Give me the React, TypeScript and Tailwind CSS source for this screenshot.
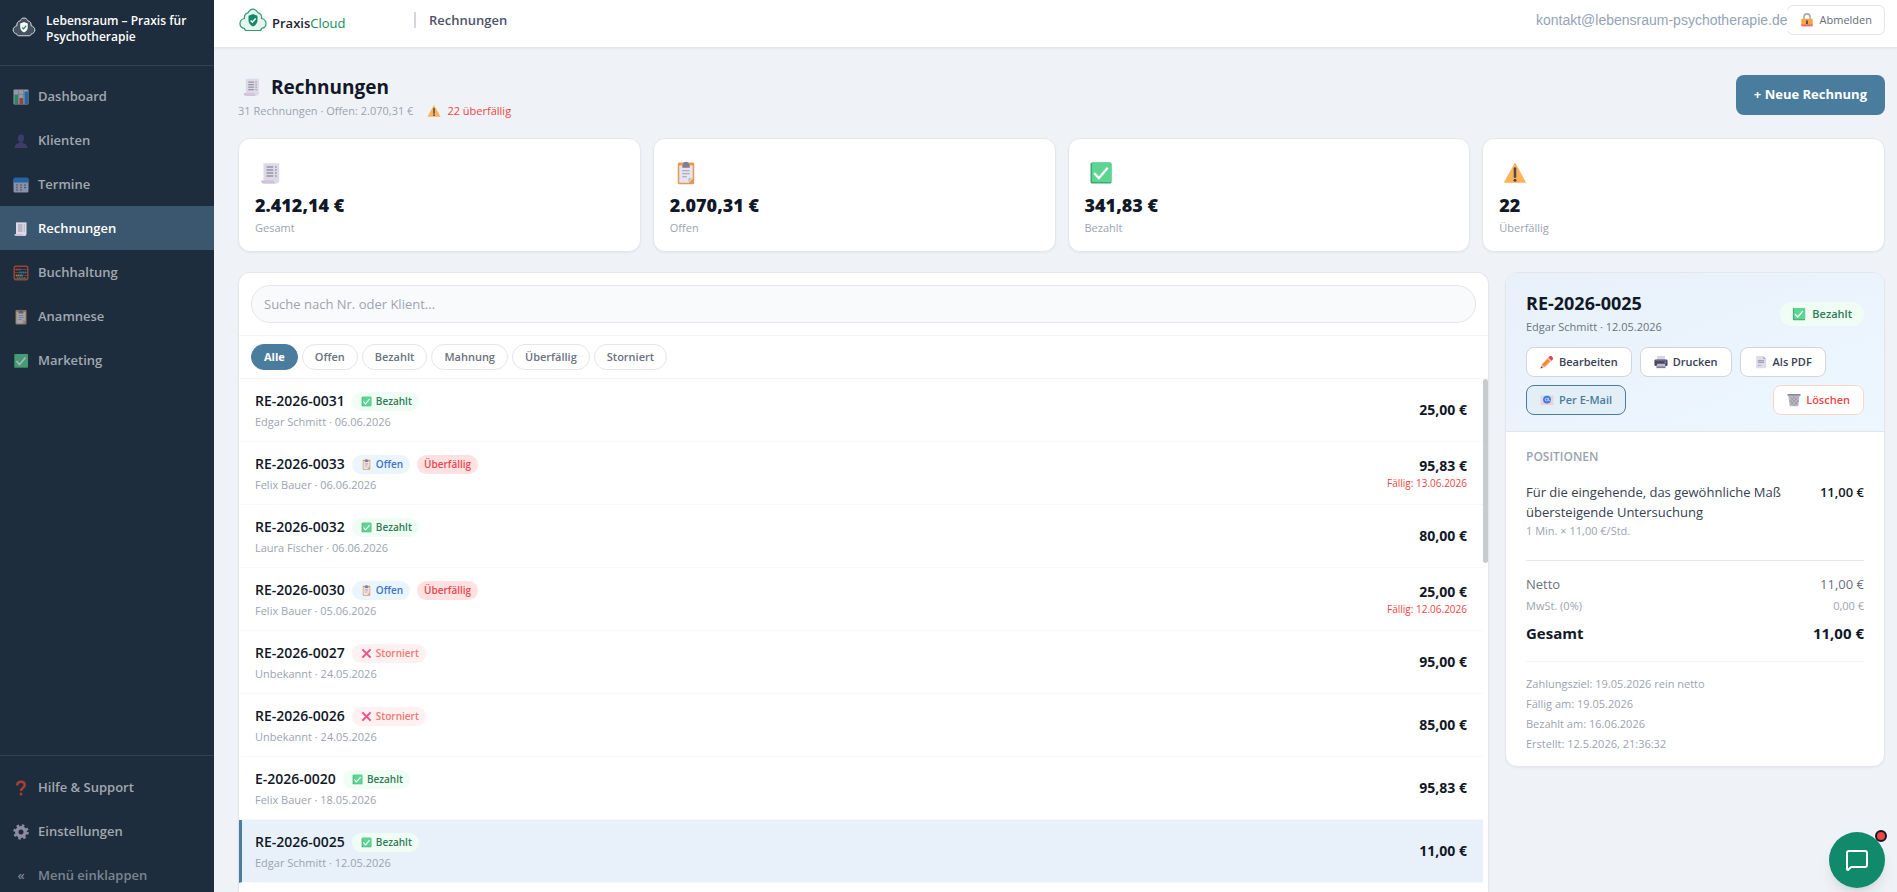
import React from 'react';
import { MessageSquare } from 'lucide-react';

type IconName =
  | 'receipt' | 'clipboard' | 'check' | 'warning' | 'chart' | 'user' | 'calendar' | 'abacus'
  | 'question' | 'gear' | 'pencil' | 'printer' | 'page' | 'mail' | 'trash' | 'lock' | 'cross';

const drawings: Record<IconName, React.ReactNode> = {
  receipt: (
    <>
      <path d="M6 2l2 1.5L10 2l2 1.5L14 2l2 1.5L18 2l2 1.5L22 2l2 1.5L27 2v24a4 4 0 0 1-4 4H6z" fill="#dcdae6" />
      <path d="M3 26h17a3 3 0 0 0 3 4H6a3 3 0 0 1-3-4z" fill="#c6bdd4" />
      <path d="M6 28h14" stroke="#e0c2e4" strokeWidth="1.5" />
      <path d="M10 8h9M21.5 8h2M10 12h9M21.5 12h2M10 16h9M21.5 16h2M10 20h9M21.5 20h2" stroke="#9795a3" strokeWidth="2" />
    </>
  ),
  clipboard: (
    <>
      <rect x="5" y="2" width="22" height="29" rx="2" fill="#e39a55" />
      <path d="M7 6h18v17l-5 6H7z" fill="#e6e4ee" />
      <path d="M25 22l-6 6.5V23z" fill="#c4c0d0" />
      <path d="M12 5a4 4 0 0 1 8 0l1 1v3H11V6z" fill="#807c91" />
      <path d="M11 13h10M11 17h10M11 21h6" stroke="#a39bb0" strokeWidth="1.6" />
    </>
  ),
  check: (
    <>
      <rect x="2" y="2" width="28" height="28" rx="2" fill="#3da873" />
      <rect x="4" y="2" width="26" height="26" rx="2" fill="#5bd692" />
      <path d="M7 16l6 7L25 9" fill="none" stroke="#fff" strokeWidth="3" />
    </>
  ),
  warning: (
    <>
      <path d="M16 2l15 27H1z" fill="#ffb257" />
      <path d="M16 10v11" stroke="#4a4a55" strokeWidth="3.4" strokeLinecap="round" />
      <circle cx="16" cy="25.5" r="2" fill="#4a4a55" />
    </>
  ),
  chart: (
    <>
      <rect x="1" y="1" width="30" height="30" rx="2" fill="#d3d3e2" />
      <path d="M11 2v28M21 2v28M2 11h28" stroke="#a3a2b8" strokeWidth="1.5" />
      <rect x="3" y="12" width="7" height="18" fill="#32b877" />
      <rect x="13" y="18" width="7" height="12" fill="#e04b48" />
      <rect x="23" y="5" width="7" height="25" fill="#258bd6" />
    </>
  ),
  user: (
    <>
      <path d="M16 3c5 0 7 4 6 8 0 4-2 7-6 7s-6-3-6-7c-1-4 1-8 6-8z" fill="#4c4580" />
      <path d="M3 30c0-6 4-9 10-10v-3h6v3c6 1 10 4 10 10z" fill="#4c4580" />
    </>
  ),
  calendar: (
    <>
      <rect x="1" y="3" width="30" height="28" rx="3" fill="#c4c9dd" />
      <path d="M4 1h24a3 3 0 0 1 3 3v7H1V4a3 3 0 0 1 3-3z" fill="#2584d8" />
      <path d="M6 16h4M14 16h4M22 16h4M6 21h4M14 21h4M6 26h4M14 26h4" stroke="#85849c" strokeWidth="3" />
      <path d="M22 21h4" stroke="#2584d8" strokeWidth="3" />
    </>
  ),
  abacus: (
    <>
      <rect x="2.5" y="2.5" width="27" height="27" rx="3" fill="none" stroke="#d9532f" strokeWidth="3" />
      <path d="M4 9h24M4 15h24M4 21h24M4 27h24" stroke="#c98a76" strokeWidth="1" />
      <path d="M6 9h10" stroke="#e0503f" strokeWidth="4" strokeDasharray="2.5 1" />
      <path d="M13 15h13" stroke="#318de0" strokeWidth="4" strokeDasharray="2.5 1" />
      <path d="M6 21h14" stroke="#e0a53e" strokeWidth="4" strokeDasharray="2.5 1" />
      <path d="M8 26h18" stroke="#37b57a" strokeWidth="3" strokeDasharray="2.5 1" />
    </>
  ),
  question: (
    <>
      <path d="M8.5 11c0-5 3-7.5 7.5-7.5s7.5 3 7.5 7c0 5-7.5 5.500-7.5 11.500" fill="none" stroke="#f0492f" strokeWidth="5" />
      <circle cx="16" cy="28" r="3" fill="#f0492f" />
    </>
  ),
  gear: (
    <>
      <circle cx="16" cy="16" r="8.5" fill="none" stroke="#aaa5b8" strokeWidth="7" />
      <circle cx="16" cy="16" r="13" fill="none" stroke="#aaa5b8" strokeWidth="5" strokeDasharray="5 5.21" />
    </>
  ),
  pencil: (
    <>
      <path d="M4 21L21 4l7 7-17 17z" fill="#f59a4b" />
      <path d="M7 24L24 7" stroke="#d46a35" strokeWidth="2" />
      <path d="M4 21l7 7-10 3z" fill="#e8b690" />
      <path d="M3 26l3 3-5 2z" fill="#44404f" />
      <path d="M19 6l3-3c3-3 10 3 7 7l-3 3z" fill="#e8414f" />
      <path d="M18 7l7 7" stroke="#cfcbdc" strokeWidth="3" />
    </>
  ),
  printer: (
    <>
      <path d="M7 2h18v11H7z" fill="#d5d4e2" />
      <rect x="1" y="10" width="30" height="15" rx="3" fill="#494560" />
      <path d="M4 13h24" stroke="#6a6685" strokeWidth="3" />
      <path d="M7 20h18l2 10H5z" fill="#bcbacb" />
      <path d="M6 28h20" stroke="#7f7b94" strokeWidth="3" />
      <circle cx="26" cy="17" r="2" fill="#4da4ea" />
    </>
  ),
  page: (
    <>
      <path d="M5 2h16l7 7v21H5z" fill="#dddbe7" />
      <path d="M21 2l7 7h-7z" fill="#b9b4c8" />
      <path d="M9 13h14M9 17h14" stroke="#a7a1b8" strokeWidth="3" />
      <path d="M9 24h8" stroke="#b3aec2" strokeWidth="2" />
    </>
  ),
  mail: (
    <>
      <path d="M1 5h30v22H1z" fill="#dfd8e9" />
      <path d="M1 27l11-10h8l11 10z" fill="#f0c7df" />
      <circle cx="16" cy="15" r="9" fill="#3f7ed2" />
      <circle cx="15" cy="15" r="3" fill="none" stroke="#cbdcf5" strokeWidth="2" />
      <path d="M19 11v5a2.5 2.5 0 0 0 4 1" fill="none" stroke="#cbdcf5" strokeWidth="2" />
    </>
  ),
  trash: (
    <>
      <path d="M3 5h26l-3 25H6z" fill="#bdbac7" />
      <path d="M7 9l17 18M14 8l12 12M6 17l11 12M25 9L8 27M18 8L7 20M26 17L15 29" stroke="#88858f" strokeWidth="1.4" />
      <path d="M1 4h30" stroke="#8d8a98" strokeWidth="4" />
    </>
  ),
  lock: (
    <>
      <path d="M9 15V9a7 7 0 0 1 14 0v6" fill="none" stroke="#a9a6b6" strokeWidth="3.5" />
      <rect x="3" y="13" width="26" height="17" rx="2" fill="#f9a63f" />
      <path d="M3 26h26v2a2 2 0 0 1-2 2H5a2 2 0 0 1-2-2z" fill="#f0647c" />
      <path d="M16 17v8" stroke="#4b4553" strokeWidth="4" />
    </>
  ),
  cross: <path d="M4 4l24 24M28 4L4 28" stroke="#f0528a" strokeWidth="6" />,
};

const Icon = ({ name, className }: { name: IconName; className: string }) => (
  <svg viewBox="0 0 32 32" className={`shrink-0 ${className}`} aria-hidden="true">
    {drawings[name]}
  </svg>
);

const CloudLogo = ({ dark = false, className }: { dark?: boolean; className: string }) => (
  <svg viewBox="0 0 28 24" className={`shrink-0 ${className}`} aria-hidden="true">
    <path
      d="M7.5 22.5c-1.500 0-2-1-2-2C2.800 20 1 18 1 15.500s2-4.500 4.500-5C5 7.500 6.500 5.200 9 4.800 10.300 2.500 12 1.200 14 1.200s3.700 1.300 5 3.600c2.500.4 4 2.700 3.500 5.700 2.500.5 4.500 2.500 4.500 5s-1.800 4.500-4.500 5c0 1-.5 2-2 2z"
      fill={dark ? '#46525f' : '#e6f5ee'}
      stroke={dark ? '#d9dde2' : '#2c9a76'}
      strokeWidth="1.2"
    />
    <path d="M14 6l4.500 1.700v4.600c0 3-1.800 5-4.500 6.200-2.700-1.200-4.500-3.200-4.500-6.200V7.700z" fill={dark ? '#fff' : '#118a6b'} />
    <path d="M11.6 12.400l1.800 1.800 3.200-3.700" fill="none" stroke={dark ? '#118a6b' : '#fff'} strokeWidth="1.4" />
  </svg>
);

const navItems: { label: string; icon: IconName; active?: boolean }[] = [
  { label: 'Dashboard', icon: 'chart' },
  { label: 'Klienten', icon: 'user' },
  { label: 'Termine', icon: 'calendar' },
  { label: 'Rechnungen', icon: 'receipt', active: true },
  { label: 'Buchhaltung', icon: 'abacus' },
  { label: 'Anamnese', icon: 'clipboard' },
  { label: 'Marketing', icon: 'check' },
];

const stats: { value: string; label: string; icon: IconName }[] = [
  { value: '2.412,14 €', label: 'Gesamt', icon: 'receipt' },
  { value: '2.070,31 €', label: 'Offen', icon: 'clipboard' },
  { value: '341,83 €', label: 'Bezahlt', icon: 'check' },
  { value: '22', label: 'Überfällig', icon: 'warning' },
];

const filters = ['Alle', 'Offen', 'Bezahlt', 'Mahnung', 'Überfällig', 'Storniert'];

type Status = 'Bezahlt' | 'Offen' | 'Storniert';

const statusStyles: Record<Status, { icon: IconName; className: string }> = {
  Bezahlt: { icon: 'check', className: 'bg-[#f0fdf4] text-[#2f7a58]' },
  Offen: { icon: 'clipboard', className: 'bg-[#ebf5ff] text-[#3b74c9]' },
  Storniert: { icon: 'cross', className: 'bg-[#fff1f1] text-[#f2776f]' },
};

const invoices: { nr: string; client: string; date: string; status: Status; amount: string; due?: string; selected?: boolean }[] = [
  { nr: 'RE-2026-0031', client: 'Edgar Schmitt', date: '06.06.2026', status: 'Bezahlt', amount: '25,00 €' },
  { nr: 'RE-2026-0033', client: 'Felix Bauer', date: '06.06.2026', status: 'Offen', amount: '95,83 €', due: '13.06.2026' },
  { nr: 'RE-2026-0032', client: 'Laura Fischer', date: '06.06.2026', status: 'Bezahlt', amount: '80,00 €' },
  { nr: 'RE-2026-0030', client: 'Felix Bauer', date: '05.06.2026', status: 'Offen', amount: '25,00 €', due: '12.06.2026' },
  { nr: 'RE-2026-0027', client: 'Unbekannt', date: '24.05.2026', status: 'Storniert', amount: '95,00 €' },
  { nr: 'RE-2026-0026', client: 'Unbekannt', date: '24.05.2026', status: 'Storniert', amount: '85,00 €' },
  { nr: 'E-2026-0020', client: 'Felix Bauer', date: '18.05.2026', status: 'Bezahlt', amount: '95,83 €' },
  { nr: 'RE-2026-0025', client: 'Edgar Schmitt', date: '12.05.2026', status: 'Bezahlt', amount: '11,00 €', selected: true },
];

const navLink = 'flex h-11 items-center gap-[9px] pt-0.5 pl-[13px] text-[13px] font-semibold';

const Sidebar = () => (
  <aside className="flex w-[214px] shrink-0 flex-col bg-[#1e2d3d]">
    <div className="flex h-[66px] items-start gap-2.5 border-b border-[#32414f] px-3 pt-[13px]">
      <CloudLogo dark className="mt-1 h-5 w-6" />
      <p className="text-[12px] leading-4 font-semibold text-white">
        Lebensraum – Praxis für
        <br />
        Psychotherapie
      </p>
    </div>
    <nav className="flex-1 pt-2">
      {navItems.map((item) => (
        <a key={item.label} href="#" className={`${navLink} ${item.active ? 'bg-[#3b566f] text-white' : 'text-[#a1a8b0]'}`}>
          <Icon name={item.icon} className={item.active ? 'size-4' : 'size-4 opacity-65'} />
          {item.label}
        </a>
      ))}
    </nav>
    <div className="border-t border-[#32414f] pt-[9px]">
      <a href="#" className={`${navLink} text-[#a1a8b0]`}>
        <Icon name="question" className="size-4 opacity-65" />
        Hilfe &amp; Support
      </a>
      <a href="#" className={`${navLink} text-[#a1a8b0]`}>
        <Icon name="gear" className="size-4 opacity-80" />
        Einstellungen
      </a>
      <button className="flex h-[39px] items-start gap-[9px] pt-3 pl-[13px] text-[13px] leading-5 font-semibold text-[#7b8591]">
        <span className="w-4 text-center">«</span>
        Menü einklappen
      </button>
    </div>
  </aside>
);

const Header = () => (
  <header className="flex h-12 items-center border-b border-[#e2e5ea] bg-white pt-[5px] pr-3 pb-3 pl-[25px] shadow-xs">
    <div className="flex w-[175px] items-center gap-[5px]">
      <CloudLogo className="h-6 w-7" />
      <span className="pt-1.5 text-[13px] leading-4 font-semibold text-[#1e2433]">
        Praxis<span className="font-normal text-[#118a5b]">Cloud</span>
      </span>
    </div>
    <div className="h-4 w-0.5 bg-[#d5d7df]" />
    <span className="ml-[13px] pt-0.5 text-[13px] font-semibold text-[#4e5268]">Rechnungen</span>
    <span className="relative z-10 ml-auto -mr-px bg-white font-['Liberation_Sans',Arial,sans-serif] text-[14px] text-[#94a3b8]">
      kontakt@lebensraum-psychotherapie.de
    </span>
    <button className="flex h-[30px] items-center gap-1.5 rounded-md border border-[#e5e5ec] bg-white px-3 text-[11px] font-medium text-[#666a7a]">
      <Icon name="lock" className="size-3.5" />
      Abmelden
    </button>
  </header>
);

const InvoiceList = () => (
  <section className="min-w-0 flex-1 rounded-t-xl border border-b-0 border-[#e4e6eb] bg-white shadow-xs">
    <div className="border-b border-[#f2f3f5] p-3">
      <input
        type="search"
        aria-label="Rechnungen suchen"
        placeholder="Suche nach Nr. oder Klient..."
        className="h-[38px] w-full rounded-full border border-[#e4e6eb] bg-[#f9fafc] px-3 text-[13px] placeholder:text-[#9ea3af]"
      />
    </div>
    <div className="flex gap-1 border-b border-[#f2f3f5] px-3 py-2">
      {filters.map((filter, i) => (
        <button
          key={filter}
          className={`h-[26px] rounded-full border px-3 text-[11px] leading-4 ${
            i === 0 ? 'border-[#4a7c9e] bg-[#4a7c9e] font-bold text-white' : 'border-[#e4e6eb] bg-white font-semibold text-[#6b7280]'
          }`}
        >
          {filter}
        </button>
      ))}
    </div>
    <div className="relative">
      <ul className="mr-[5px]">
        {invoices.map((inv) => {
          const status = statusStyles[inv.status];
          return (
            <li key={inv.nr}>
              <button
                className={`flex h-[63px] w-full items-center justify-between border-b border-l-3 border-b-[#f7f8f9] pr-4 pl-[13px] text-left ${
                  inv.selected ? 'border-l-[#4a7c9e] bg-[#e8f1f9]' : 'border-l-transparent'
                }`}
              >
                <span className="flex flex-col gap-0.5 pt-0.5">
                  <span className="flex items-center gap-[7px]">
                    <span className="text-[14px] leading-5 font-semibold text-[#111827]">{inv.nr}</span>
                    <span className={`flex h-[19px] items-center gap-1 rounded-full pr-[7px] pl-[9px] text-[10px] font-semibold ${status.className}`}>
                      <Icon name={status.icon} className="size-[11px]" />
                      {inv.status}
                    </span>
                    {inv.due && (
                      <span className="flex h-[19px] items-center rounded-full bg-[#ffe1e1] px-[7px] text-[10px] font-semibold text-[#e5484d]">
                        Überfällig
                      </span>
                    )}
                  </span>
                  <span className="text-[11px] leading-[18px] text-[#9ca3af]">
                    {inv.client} · {inv.date}
                  </span>
                </span>
                <span className="flex flex-col items-end">
                  <span className="text-[14px] leading-5 font-bold text-[#111827]">{inv.amount}</span>
                  {inv.due && <span className="text-[10px] leading-[14px] font-medium text-[#ef4444]">Fällig: {inv.due}</span>}
                </span>
              </button>
            </li>
          );
        })}
      </ul>
      <div className="absolute top-0 right-0 h-[184px] w-[5px] rounded-full bg-[#c9cacd]" />
    </div>
  </section>
);

const actionButton = 'flex h-[30px] items-center gap-[5px] rounded-lg border px-[13px] text-[11px] font-semibold';

const InvoiceDetail = () => (
  <section className="w-[380px] shrink-0 self-start overflow-hidden rounded-xl border border-[#e4e6eb] bg-white shadow-xs">
    <div className="border-b border-[#e0e5ea] bg-linear-to-br from-[#e8f1f9] to-[#edf7ff] px-5 pt-[18px] pb-4">
      <div className="flex items-center justify-between">
        <div>
          <h2 className="text-[18px] leading-6 font-bold text-[#111827]">RE-2026-0025</h2>
          <p className="mt-0.5 text-[11px] leading-5 text-[#6b7280]">Edgar Schmitt · 12.05.2026</p>
        </div>
        <span className="flex h-6 items-center gap-1.5 rounded-full bg-[#f0fdf4] px-3 text-[11px] font-semibold text-[#2f7a58]">
          <Icon name="check" className="size-3.5" />
          Bezahlt
        </span>
      </div>
      <div className="mt-2.5 flex flex-wrap gap-2">
        <button className={`${actionButton} border-[#d2d5de] bg-white text-[#374151]`}>
          <Icon name="pencil" className="size-3.5" />
          Bearbeiten
        </button>
        <button className={`${actionButton} border-[#d2d5de] bg-white text-[#374151]`}>
          <Icon name="printer" className="size-3.5" />
          Drucken
        </button>
        <button className={`${actionButton} border-[#d2d5de] bg-white text-[#374151]`}>
          <Icon name="page" className="size-3.5" />
          Als PDF
        </button>
        <button className={`${actionButton} border-[#4a7c9e] bg-[#e3eef6] text-[#4a7c9e]`}>
          <Icon name="mail" className="size-3.5" />
          Per E-Mail
        </button>
        <button className={`${actionButton} ml-auto border-[#fdd5c8] bg-white text-[#ef4444]`}>
          <Icon name="trash" className="size-3.5" />
          Löschen
        </button>
      </div>
    </div>
    <div className="px-5 pt-[17px] pb-3">
      <h3 className="text-[12px] leading-4 font-semibold text-[#9ca3af]">POSITIONEN</h3>
      <div className="mt-[17px] flex items-start justify-between border-b border-[#e4e6ea] pb-5">
        <div>
          <p className="max-w-[280px] text-[13px] leading-5 text-[#374151]">Für die eingehende, das gewöhnliche Maß übersteigende Untersuchung</p>
          <p className="text-[11px] leading-[18px] text-[#9ca3af]">1 Min. × 11,00 €/Std.</p>
        </div>
        <span className="text-[13px] leading-5 font-semibold text-[#111827]">11,00 €</span>
      </div>
      <dl className="border-b border-[#f3f4f6] pt-3 pb-4">
        <div className="flex justify-between text-[13px] leading-[22px] text-[#6b7280]">
          <dt>Netto</dt>
          <dd>11,00 €</dd>
        </div>
        <div className="flex justify-between text-[11px] leading-[22px] text-[#9ca3af]">
          <dt>MwSt. (0%)</dt>
          <dd>0,00 €</dd>
        </div>
        <div className="mt-1 flex justify-between text-[15px] leading-6 font-bold text-[#111827]">
          <dt>Gesamt</dt>
          <dd>11,00 €</dd>
        </div>
      </dl>
      <div className="pt-3 text-[11px] leading-5 text-[#9ca3af]">
        <p>Zahlungsziel: 19.05.2026 rein netto</p>
        <p>Fällig am: 19.05.2026</p>
        <p>Bezahlt am: 16.06.2026</p>
        <p>Erstellt: 12.5.2026, 21:36:32</p>
      </div>
    </div>
  </section>
);

const App = () => (
  <div className="flex h-screen overflow-hidden bg-[#eff3f8] font-['Open_Sans','Noto_Sans',sans-serif]">
    <Sidebar />
    <div className="flex min-w-0 flex-1 flex-col">
      <Header />
      <main className="flex min-h-0 flex-1 flex-col pt-[27px] pr-3 pl-6">
        <div className="flex items-start justify-between">
          <div>
            <h1 className="flex items-center gap-[9px] pl-1 text-[19px] leading-6 font-bold text-[#111827]">
              <Icon name="receipt" className="size-5" />
              Rechnungen
            </h1>
            <p className="mt-0.5 flex items-center text-[11px] leading-5 text-[#9ca3af]">
              31 Rechnungen · Offen: 2.070,31 €
              <Icon name="warning" className="mr-1.5 ml-3.5 size-3.5" />
              <span className="text-[#ef4444]">22 überfällig</span>
            </p>
          </div>
          <button className="h-10 rounded-lg bg-[#4a7c9e] px-[18px] text-[13px] font-bold text-white">+ Neue Rechnung</button>
        </div>
        <div className="mt-[17px] grid grid-cols-4 gap-3">
          {stats.map((stat) => (
            <div key={stat.label} className="rounded-xl border border-[#e4e6eb] bg-white px-4 pt-[22px] pb-[13px] shadow-xs">
              <Icon name={stat.icon} className="ml-1 size-6" />
              <p className="mt-2 text-[18px] leading-6 font-extrabold text-[#111827]">{stat.value}</p>
              <p className="mt-px text-[11px] leading-5 text-[#9ca3af]">{stat.label}</p>
            </div>
          ))}
        </div>
        <div className="mt-5 flex min-h-0 flex-1 gap-4">
          <InvoiceList />
          <InvoiceDetail />
        </div>
      </main>
    </div>
    <button aria-label="Chat öffnen" className="fixed right-3 bottom-1 flex size-14 items-center justify-center rounded-full bg-[#118a6b] text-white shadow-lg">
      <MessageSquare className="size-6" />
      <span className="absolute -top-0.5 -right-0.5 size-3 rounded-full border-2 border-[#111827] bg-[#ef4444]" />
    </button>
  </div>
);

export default App;
